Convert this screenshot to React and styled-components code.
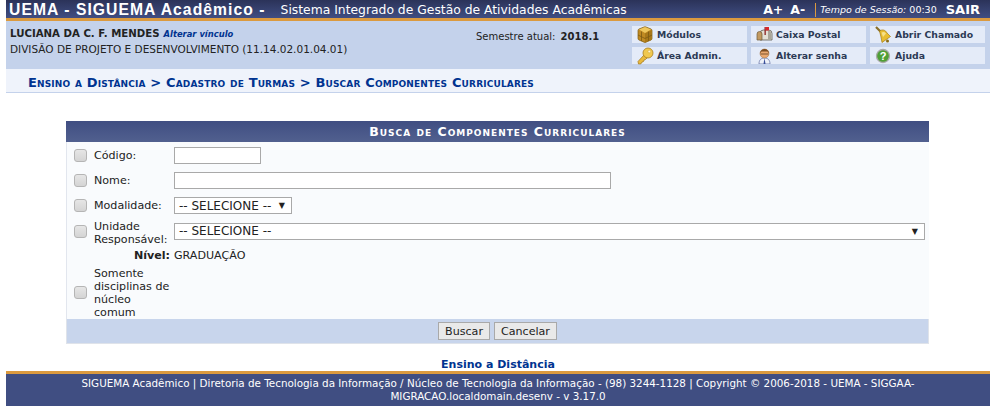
import React from 'react';
import styled, { createGlobalStyle } from 'styled-components';

const GlobalStyle = createGlobalStyle`
	html, body {
		margin: 0;
		padding: 0;
		background: #fff;
	}
	body {
		font-family: "DejaVu Sans", Verdana, sans-serif;
		font-size: 10px;
		color: #222;
	}
`;

const Page = styled.div`
	width: 984px;
	margin-left: 6px;
`;

const TopBar = styled.div`
	height: 17px;
	display: flex;
	align-items: center;
	padding: 1px 10px 0 3px;
	color: #fff;
	background: linear-gradient(#2b3359, #404e82);
	border-bottom: 3px solid #db9a3f;
	white-space: nowrap;
`;

const Brand = styled.span`
	font-family: "Liberation Sans", Arial, sans-serif;
	font-size: 15.7px;
	font-weight: bold;
	letter-spacing: 1.05px;
	margin-right: 15px;
`;

const SystemName = styled.span`
	font-size: 12.35px;
	flex: 1;
`;

const FontSize = styled.span`
	font-size: 12.5px;
	font-weight: bold;
	margin-right: 7px;
`;

const Session = styled.span`
	border-left: 1px solid #db9a3f;
	margin-left: 3px;
	padding-left: 4px;
	font-size: 9.5px;
	height: 14px;
	line-height: 14px;
	em { font-style: italic; }
`;

const Logout = styled.span`
	font-size: 13px;
	font-weight: bold;
	margin-left: 9px;
`;

const InfoBar = styled.div`
	height: 48px;
	display: flex;
	background: #c4d2eb;
`;

const UserBlock = styled.div`
	padding: 5px 0 0 4px;
	width: 466px;
	line-height: 15px;
	font-size: 10.5px;
`;

const UserName = styled.strong`
	color: #222;
	font-size: 10.2px;
`;

const SwitchLink = styled.em`
	color: #003390;
	font-size: 8.4px;
	font-weight: bold;
	margin-left: 4px;
`;

const Semester = styled.div`
	width: 156px;
	padding-top: 10px;
	strong { margin-left: 2px; }
`;

const Shortcuts = styled.div`
	display: grid;
	grid-template-columns: repeat(3, 115px);
	grid-auto-rows: 17px;
	column-gap: 4px;
	row-gap: 4px;
	padding-top: 5px;
`;

const Shortcut = styled.div`
	position: relative;
	display: flex;
	align-items: center;
	padding-left: 25px;
	background: #e4ebf8;
	color: #2c3a55;
	font-weight: bold;
	font-size: 9.3px;
	svg {
		position: absolute;
		left: 5px;
		top: 0;
	}
`;

const Breadcrumb = styled.div`
	height: 20px;
	padding: 3px 0 0 22px;
	display: flex;
	align-items: center;
	background: #eff3fb;
	border-bottom: 1px solid #c4d2eb;
	color: #003390;
	font-size: 13px;
	font-weight: bold;
	font-variant: small-caps;
	letter-spacing: 0.15px;
	white-space: nowrap;
`;

const Form = styled.div`
	width: 863px;
	margin: 28px 0 0 60px;
	font-size: 11.1px;
`;

const FormTitle = styled.div`
	height: 21px;
	line-height: 21px;
	text-align: center;
	color: #fff;
	font-size: 12.5px;
	font-weight: bold;
	font-variant: small-caps;
	letter-spacing: 1px;
	background: linear-gradient(#404e82, #51608f);
`;

const FormBody = styled.div`
	background: #f9fbfd;
	padding-top: 1px;
	border-left: 1px solid #e2e6ee;
`;

const Row = styled.div`
	display: flex;
	align-items: center;
	min-height: ${props => props.height || '25px'};
`;

const CheckCell = styled.div`
	width: 27px;
	display: flex;
	justify-content: center;
`;

const Check = styled.span`
	width: 11px;
	height: 11px;
	border: 1px solid #b5b5b5;
	border-radius: 3px;
	background: linear-gradient(#e6e6e6, #d4d4d4);
`;

const Label = styled.div`
	width: 80px;
	color: #222;
	line-height: 13px;
	margin-top: ${props => props.drop || '0'};
	margin-bottom: calc(-1 * ${props => props.drop || '0px'});
`;

const StrongLabel = styled.strong`
	width: 107px;
	text-align: right;
	padding-right: 4px;
	box-sizing: border-box;
`;

const TextInput = styled.div`
	width: ${props => props.width};
	height: 15px;
	background: #fff;
	border: 1px solid #a9a9a9;
`;

const SelectBox = styled.div`
	display: flex;
	align-items: center;
	justify-content: space-between;
	width: ${props => props.width};
	box-sizing: border-box;
	height: 17px;
	padding: 0 6px 0 4px;
	background: #fff;
	border: 1px solid #a9a9a9;
	color: #222;
	font-size: 12px;
	&::after {
		content: '▼';
		font-size: 8px;
	}
`;

const FormFoot = styled.div`
	height: 24px;
	display: flex;
	justify-content: center;
	align-items: center;
	gap: 4px;
	background: #c8d5ec;
	border: 1px solid #dfe3ea;
	border-top: 0;
`;

const Button = styled.button`
	height: 18px;
	padding: 0 6px;
	font-family: inherit;
	font-size: 11.1px;
	color: #222;
	background: #e9e9e9;
	border: 1px solid #a9a9a9;
`;

const BackLink = styled.div`
	margin-top: 13px;
	height: 14px;
	line-height: 15px;
	text-align: center;
	color: #003390;
	font-size: 11px;
	font-weight: bold;
`;

const Footer = styled.div`
	height: 29px;
	padding: 3px 60px 0;
	text-align: center;
	color: #fff;
	font-size: 10.36px;
	line-height: 12.5px;
	background: #404e82;
	border-top: 3px solid #db9a3f;
`;

const BoxIcon = () => (
	<svg width="16" height="17" viewBox="0 0 16 17">
		<path d="M1 4.500Q1 3.500 2 3L7 1Q8 .6 9 1l5 2q1 .5 1 1.500v8q0 1-1 1.500l-5 2.200q-1 .4-2 0L2 14q-1-.5-1-1.500z" fill="#c08a22" stroke="#7d5a12" strokeWidth=".7" />
		<path d="M8 7.500L15 4v8.500q0 1-1 1.500l-6 2.500z" fill="#a87818" />
		<path d="M2 3.600L8 1l6 2.600L8 7z" fill="#eec75c" />
		<path d="M1 9l7 3.500L15 9M4.500 5.500v9.500M11.500 5.500v9.500" fill="none" stroke="#7d5a12" strokeWidth=".8" />
	</svg>
);

const KeyIcon = () => (
	<svg width="17" height="18" viewBox="0 0 17 18">
		<path d="M7 8L1 14.500l.5 2.500 2.500-.2 1-1.800 1.500-.5.500-1.500 1.500-.5L11 10z" fill="#e9b93c" stroke="#a97d1c" strokeWidth=".8" />
		<circle cx="11" cy="6" r="5" fill="#f0c84f" stroke="#a97d1c" strokeWidth=".8" />
		<circle cx="12.300" cy="4.500" r="1.300" fill="#fff6cf" stroke="#c79a2c" strokeWidth=".4" />
	</svg>
);

const MailboxIcon = () => (
	<svg width="17" height="17" viewBox="0 0 17 17">
		<path d="M4 7.500a3.500 3.500 0 0 1 3.500-3.500h5A3.500 3.500 0 0 1 16 7.500V14H4z" fill="#e3e0d6" stroke="#5e5a50" strokeWidth=".8" />
		<path d="M12 4.500a3 3 0 0 1 3 3V13.500h-3z" fill="#a9a598" />
		<path d="M1 8a2.500 2.500 0 0 1 5 0v6H1z" fill="#c29a62" stroke="#6f5a3a" strokeWidth=".7" />
		<path d="M8.500 1h1.300v8H8.500z" fill="#8a2020" />
		<path d="M9.500 1h3.500v3.500H9.500z" fill="#d9262b" />
	</svg>
);

const PersonIcon = () => (
	<svg width="17" height="17" viewBox="0 0 17 17">
		<path d="M3 17c0-4 2-6 5.500-6S14 13 14 17z" fill="#eef1f8" stroke="#5a6aa0" strokeWidth=".7" />
		<path d="M8.500 11l-1 6h2z" fill="#3a4f9a" />
		<circle cx="8.500" cy="6.500" r="4.500" fill="#eaa86f" stroke="#9a6a3a" strokeWidth=".5" />
		<path d="M4 6.500A4.500 4.500 0 0 1 13 6.500L11.500 4.500h-6z" fill="#7a4d22" />
		<path d="M4.500 6.500h8v1h-8z" fill="#7c5530" />
	</svg>
);

const BellIcon = () => (
	<svg width="17" height="17" viewBox="0 0 17 17">
		<path d="M1 1l4.500 4.500" stroke="#8a7028" strokeWidth="2.200" />
		<path d="M4.500 5c3-2 6-1 7.500 2l3.500 3.500L7 16.500 6 11z" fill="#e8bd33" stroke="#a57d12" strokeWidth=".7" />
		<path d="M6.500 6.500c2-1 3.500-.5 4.500 1L8 11z" fill="#f6e08a" />
		<circle cx="12.500" cy="15" r="1.500" fill="#8a6a14" />
	</svg>
);

const HelpIcon = () => (
	<svg width="17" height="17" viewBox="0 0 17 17">
		<circle cx="8" cy="9" r="6.500" fill="#4f9f35" stroke="#a9a9a9" strokeWidth="1.300" />
		<text x="8" y="13" textAnchor="middle" fontSize="11" fontWeight="bold" fill="#fff" fontFamily="Liberation Sans">?</text>
	</svg>
);

const App = () => {
	return (
		<>
			<GlobalStyle />
			<Page>
				<TopBar>
					<Brand>UEMA - SIGUEMA Acadêmico -</Brand>
					<SystemName>Sistema Integrado de Gestão de Atividades Acadêmicas</SystemName>
					<FontSize>A+</FontSize>
					<FontSize>A-</FontSize>
					<Session>
						<em>Tempo de Sessão:</em> 00:30
					</Session>
					<Logout>SAIR</Logout>
				</TopBar>
				<InfoBar>
					<UserBlock>
						<UserName>LUCIANA DA C. F. MENDES</UserName>
						<SwitchLink>Alterar vínculo</SwitchLink>
						<br />
						DIVISÃO DE PROJETO E DESENVOLVIMENTO (11.14.02.01.04.01)
					</UserBlock>
					<Semester>
						Semestre atual: <strong>2018.1</strong>
					</Semester>
					<Shortcuts>
						<Shortcut><BoxIcon />Módulos</Shortcut>
						<Shortcut><MailboxIcon />Caixa Postal</Shortcut>
						<Shortcut><BellIcon />Abrir Chamado</Shortcut>
						<Shortcut><KeyIcon />Área Admin.</Shortcut>
						<Shortcut><PersonIcon />Alterar senha</Shortcut>
						<Shortcut><HelpIcon />Ajuda</Shortcut>
					</Shortcuts>
				</InfoBar>
				<Breadcrumb>Ensino a Distância &gt; Cadastro de Turmas &gt; Buscar Componentes Curriculares</Breadcrumb>
				<Form>
					<FormTitle>Busca de Componentes Curriculares</FormTitle>
					<FormBody>
						<Row>
							<CheckCell><Check /></CheckCell>
							<Label>Código:</Label>
							<TextInput width="85px" />
						</Row>
						<Row>
							<CheckCell><Check /></CheckCell>
							<Label>Nome:</Label>
							<TextInput width="435px" />
						</Row>
						<Row>
							<CheckCell><Check /></CheckCell>
							<Label>Modalidade:</Label>
							<SelectBox width="118px">-- SELECIONE --</SelectBox>
						</Row>
						<Row height="26px">
							<CheckCell><Check /></CheckCell>
							<Label drop="2px">Unidade Responsável:</Label>
							<SelectBox width="751px">-- SELECIONE --</SelectBox>
						</Row>
						<Row height="22px">
							<StrongLabel>Nível:</StrongLabel>
							GRADUAÇÃO
						</Row>
						<Row height="53px">
							<CheckCell><Check /></CheckCell>
							<Label drop="0.5px">Somente disciplinas de núcleo comum</Label>
						</Row>
					</FormBody>
					<FormFoot>
						<Button>Buscar</Button>
						<Button>Cancelar</Button>
					</FormFoot>
				</Form>
				<BackLink>Ensino a Distância</BackLink>
				<Footer>
					SIGUEMA Acadêmico | Diretoria de Tecnologia da Informação / Núcleo de Tecnologia da Informação - (98) 3244-1128 | Copyright © 2006-2018 - UEMA - SIGGAA-MIGRACAO.localdomain.desenv - v 3.17.0
				</Footer>
			</Page>
		</>
	);
};

export default App;
